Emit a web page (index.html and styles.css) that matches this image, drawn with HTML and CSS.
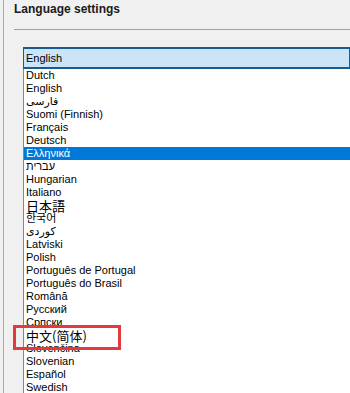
FILE: index.html
```html
<!DOCTYPE html>
<html lang="en">
<head>
    <meta charset="UTF-8">
    <meta name="viewport" content="width=device-width, initial-scale=1.0">
    <title>Language settings</title>
    <link rel="stylesheet" href="styles.css">
</head>
<body>
    <div class="frame">
        <h2 class="title">Language settings</h2>
        <div class="separator"></div>

        <div class="combo">
            <div class="combo-value">English</div>
            <div class="combo-list">
                <div class="item">Dutch</div>
                <div class="item">English</div>
                <div class="item" lang="fa">فارسی</div>
                <div class="item">Suomi (Finnish)</div>
                <div class="item">Français</div>
                <div class="item">Deutsch</div>
                <div class="item selected">Ελληνικά</div>
                <div class="item" lang="he">עברית</div>
                <div class="item">Hungarian</div>
                <div class="item">Italiano</div>
                <div class="item cjk" lang="ja">日本語</div>
                <div class="item" lang="ko">한국어</div>
                <div class="item" lang="ku">کوردی</div>
                <div class="item">Latviski</div>
                <div class="item">Polish</div>
                <div class="item">Português de Portugal</div>
                <div class="item">Português do Brasil</div>
                <div class="item">Română</div>
                <div class="item">Русский</div>
                <div class="item">Српски</div>
                <div class="item cjk" lang="zh-CN">中文(简体)</div>
                <div class="item">Slovenčina</div>
                <div class="item">Slovenian</div>
                <div class="item">Español</div>
                <div class="item">Swedish</div>
            </div>
        </div>
    </div>

    <!-- red annotation box drawn over the list -->
    <div class="highlight-box"></div>
</body>
</html>
```

FILE: styles.css
```css
body {
    margin: 0;
    background-color: #f0f0f0;
    font-family: "Liberation Sans", "DejaVu Sans", "Noto Sans CJK SC", sans-serif;
    color: #000;
    height: 393px;
    overflow: hidden;
}
.frame {
    margin-left: 3px;
    border-left: 1px solid #a9a9a9;
    padding-left: 10px;
    height: 393px;
}
.title {
    margin: 0;
    padding-top: 2px;
    font-size: 12px;
    font-weight: bold;
    line-height: 15px;
    color: #1a1a1a;
}
.separator {
    margin-top: 12px;
    height: 1px;
    background-color: #a0a0a0;
}
.combo {
    margin-top: 17px;
    margin-left: 9px;
}
.combo-value {
    height: 18px;
    line-height: 18px;
    padding-left: 2px;
    font-size: 11px;
    background-color: #cce4f7;
    border: 1px solid #175b8f;
    border-top-width: 2px;
    border-bottom-width: 2px;
}
.combo-list {
    background-color: #fff;
    border-left: 1px solid #6a8db3;
    margin-top: 0;
}
.item {
    height: 13px;
    line-height: 13px;
    padding-left: 2px;
    font-size: 11px;
    white-space: nowrap;
}
.item.cjk {
    font-family: "Noto Sans CJK SC", sans-serif;
    font-size: 13px;
    position: relative;
    z-index: 1;
}
.item.selected {
    background-color: #0078d7;
    color: #fff;
}
.highlight-box {
    position: absolute;
    left: 13px;
    top: 325px;
    width: 102px;
    height: 19px;
    border: 3px solid #e23b3e;
}
```
